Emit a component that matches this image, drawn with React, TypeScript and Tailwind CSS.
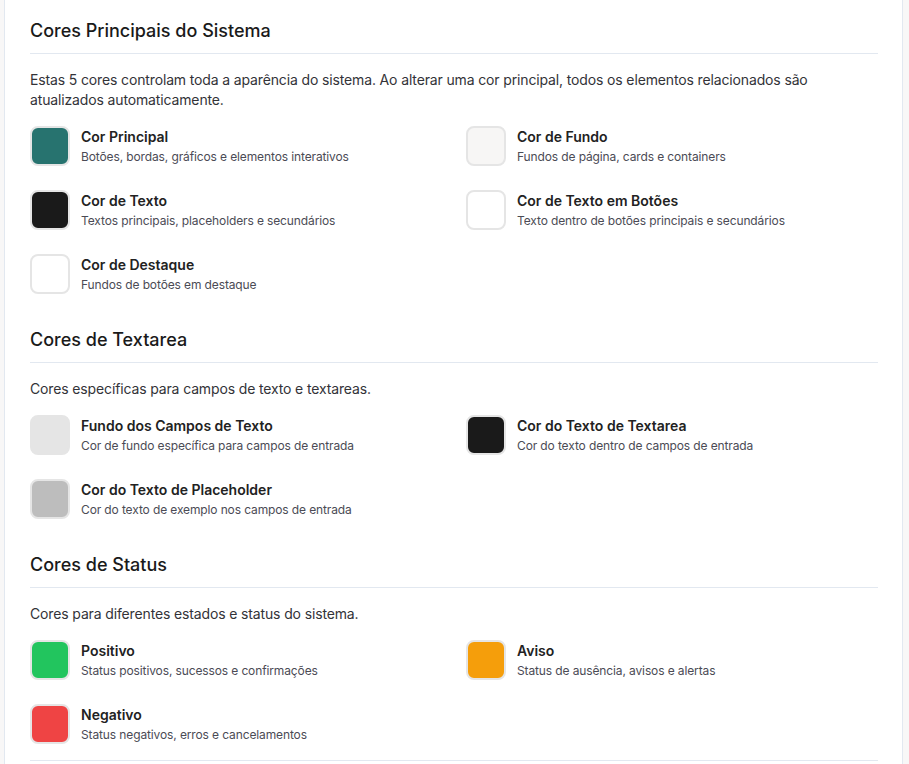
import React from 'react';

type Swatch = {
  color: string;
  title: string;
  desc: string;
};

type Section = {
  title: string;
  intro: string;
  items: Swatch[];
};

const sections: Section[] = [
  {
    title: 'Cores Principais do Sistema',
    intro:
      'Estas 5 cores controlam toda a aparência do sistema. Ao alterar uma cor principal, todos os elementos relacionados são atualizados automaticamente.',
    items: [
      { color: 'bg-[#27736f]', title: 'Cor Principal', desc: 'Botões, bordas, gráficos e elementos interativos' },
      { color: 'bg-[#f7f6f5]', title: 'Cor de Fundo', desc: 'Fundos de página, cards e containers' },
      { color: 'bg-[#1a1a1a]', title: 'Cor de Texto', desc: 'Textos principais, placeholders e secundários' },
      { color: 'bg-white', title: 'Cor de Texto em Botões', desc: 'Texto dentro de botões principais e secundários' },
      { color: 'bg-white', title: 'Cor de Destaque', desc: 'Fundos de botões em destaque' },
    ],
  },
  {
    title: 'Cores de Textarea',
    intro: 'Cores específicas para campos de texto e textareas.',
    items: [
      { color: 'bg-[#e5e5e5]', title: 'Fundo dos Campos de Texto', desc: 'Cor de fundo específica para campos de entrada' },
      { color: 'bg-[#1a1a1a]', title: 'Cor do Texto de Textarea', desc: 'Cor do texto dentro de campos de entrada' },
      { color: 'bg-[#bdbdbd]', title: 'Cor do Texto de Placeholder', desc: 'Cor do texto de exemplo nos campos de entrada' },
    ],
  },
  {
    title: 'Cores de Status',
    intro: 'Cores para diferentes estados e status do sistema.',
    items: [
      { color: 'bg-[#22c55e]', title: 'Positivo', desc: 'Status positivos, sucessos e confirmações' },
      { color: 'bg-[#f59e0b]', title: 'Aviso', desc: 'Status de ausência, avisos e alertas' },
      { color: 'bg-[#ef4444]', title: 'Negativo', desc: 'Status negativos, erros e cancelamentos' },
    ],
  },
];

function ColorItem({ item }: { item: Swatch }) {
  return (
    <div className="flex items-start gap-[11px]">
      <div className={`w-10 h-10 shrink-0 rounded-lg border-2 border-[#e5e5e5] ${item.color}`} />
      <div className="pt-px">
        <div className="text-[14px] leading-5 font-semibold text-[#222222]">{item.title}</div>
        <div className="text-[12px] leading-4 mt-[2px] tracking-[-0.12px] text-[#4b4b55]">{item.desc}</div>
      </div>
    </div>
  );
}

export default function App() {
  return (
    <div
      className="min-h-[764px] bg-[#f8f7f7] pl-[4px]"
      style={{ fontFamily: 'Inter, "Noto Sans", sans-serif' }}
    >
      <div className="w-[899px] min-h-[764px] bg-white border-x border-[#e2e8f0] pl-[25px] pr-[24px] pt-[17px]">
        {sections.map((section, i) => (
          <section key={section.title} className={i > 0 ? 'mt-8' : ''}>
            {/* Heading */}
            <h2 className="text-[18px] leading-7 font-medium text-[#1a1a1a] pb-2 border-b border-[#e2e8f0]">
              {section.title}
            </h2>
            <p className="mt-4 text-[14px] leading-5 tracking-[-0.14px] text-[#333338]">{section.intro}</p>

            {/* Swatches */}
            <div className="mt-4 grid grid-cols-2 gap-x-6 gap-y-6">
              {section.items.map((item) => (
                <ColorItem key={item.title} item={item} />
              ))}
            </div>
          </section>
        ))}
        <div className="mt-4 border-t border-[#e2e8f0]" />
      </div>
    </div>
  );
}
